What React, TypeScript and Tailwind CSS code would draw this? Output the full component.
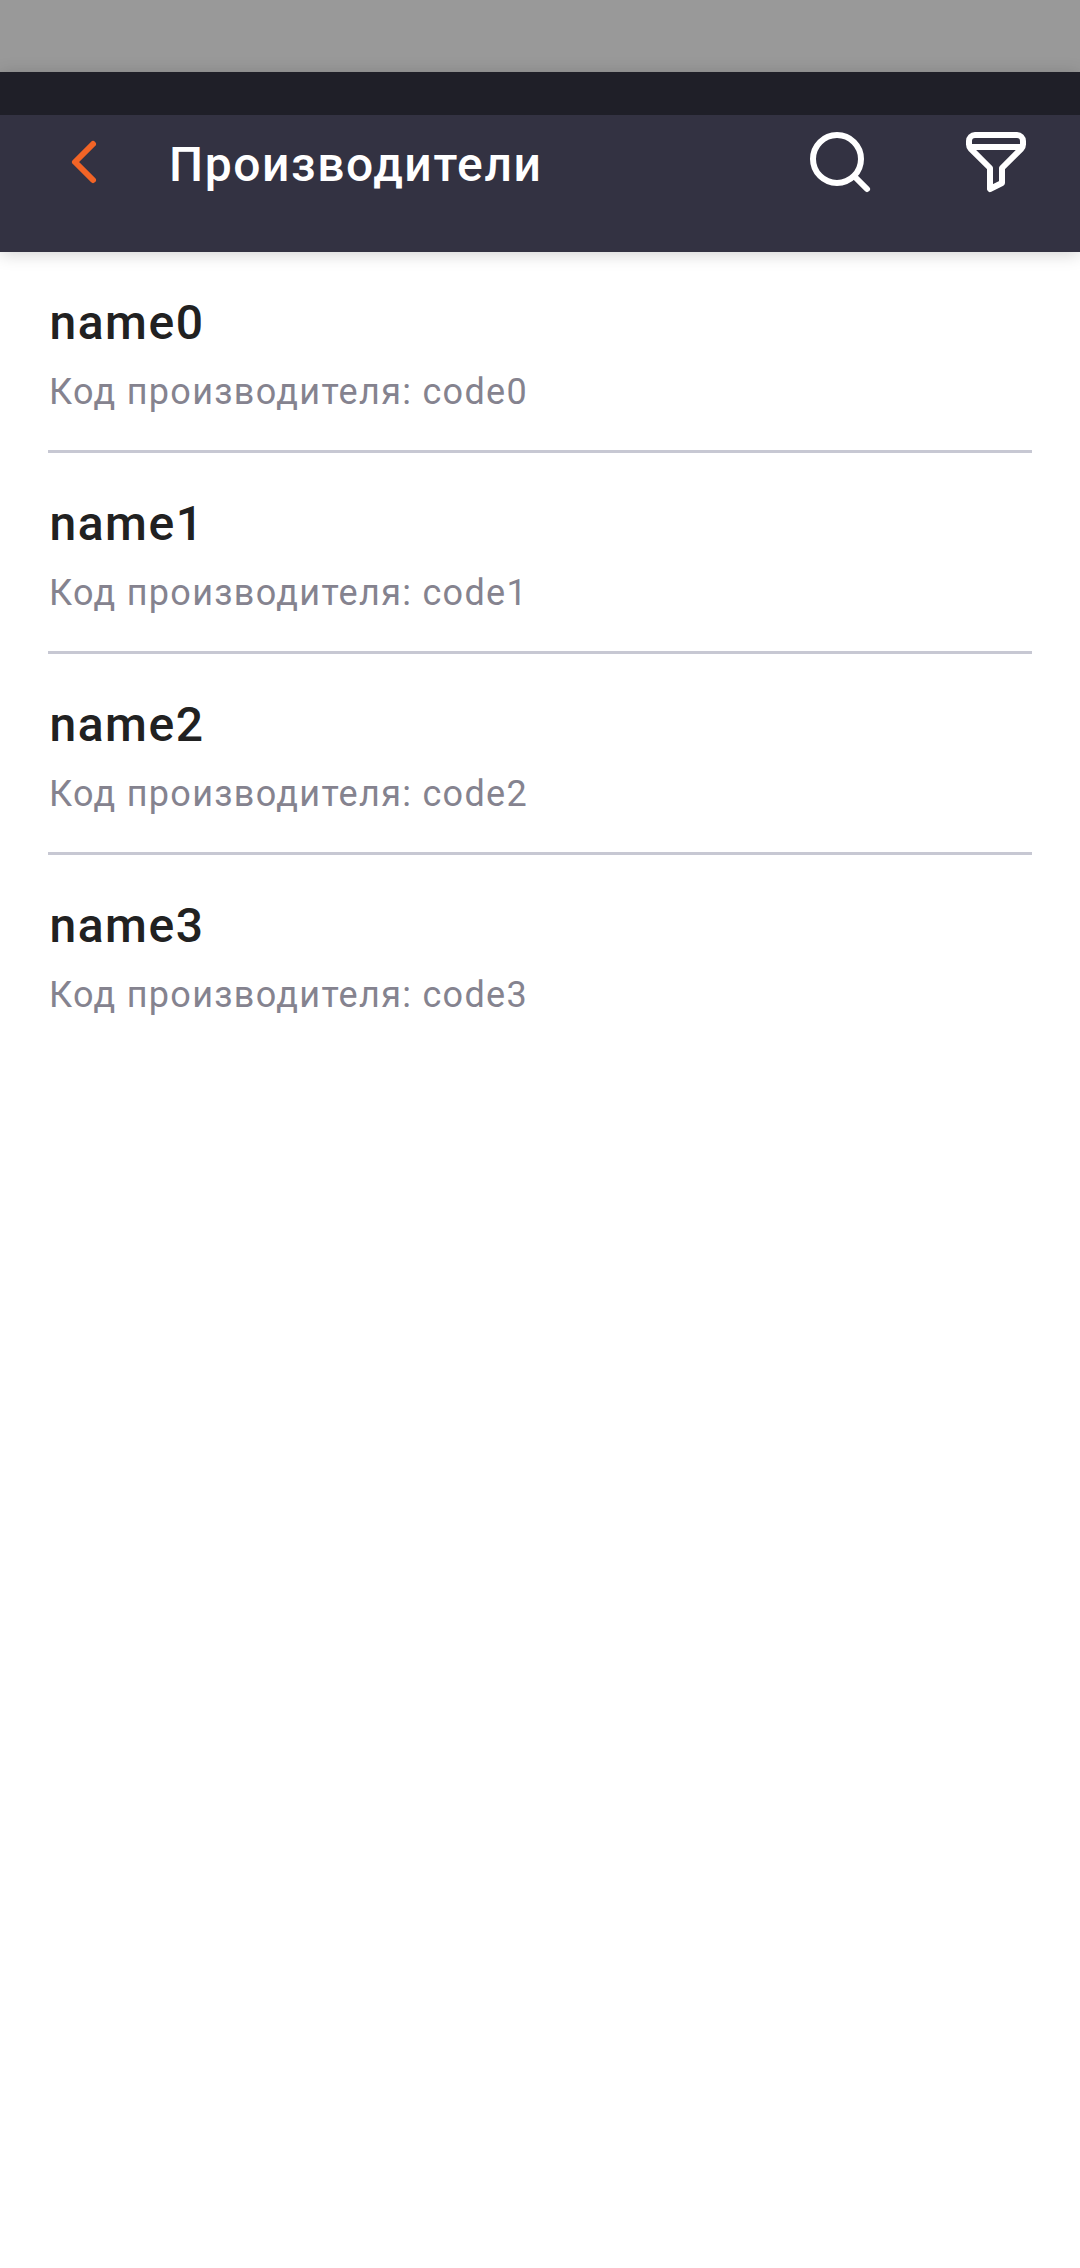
const items = [0, 1, 2, 3];

export default function App() {
  return (
    <div className="flex min-h-[2268px] w-[1080px] flex-col bg-white font-['Roboto',sans-serif]">
      <div className="h-[72px] bg-[#999999]" />
      <header className="relative h-[180px] bg-[#333242] shadow-[0_2px_16px_rgba(0,0,0,0.18)]">
        <div className="h-[43px] bg-[#1f1f28]" />
        <div className="flex h-[94px] items-center">
          <svg className="ml-[48px] h-[72px] w-[72px]" viewBox="0 0 72 72" fill="none" stroke="#f26426" strokeWidth="6" strokeLinecap="round" strokeLinejoin="round">
            <path d="M45 18L27 36L45 54" />
          </svg>
          <h1 className="mt-[6px] ml-[49px] text-[48px] leading-[56px] font-medium tracking-[1.6px] text-white">Производители</h1>
          <svg className="ml-auto h-[72px] w-[72px]" viewBox="0 0 24 24" fill="none" stroke="white" strokeWidth="2" strokeLinecap="round" strokeLinejoin="round">
            <circle cx="11" cy="11" r="8" />
            <path d="M17 17L21 21" />
          </svg>
          <svg className="mr-[48px] ml-[84px] h-[72px] w-[72px]" viewBox="0 0 24 24" fill="none" stroke="white" strokeWidth="2" strokeLinejoin="round">
            <path d="M5 3H19A2 2 0 0 1 21 5V6.17A2 2 0 0 1 20.41 7.59L14 14V19L10 21V14L3.59 7.59A2 2 0 0 1 3 6.17V5A2 2 0 0 1 5 3ZM3.5 7H20.5" />
          </svg>
        </div>
      </header>
      <main className="px-[48px]">
        {items.map((n) => (
          <section key={n} className="h-[201px] border-b-[3px] border-[#c7c8d3] pt-[43px] last:border-b-0">
            <h2 className="ml-[1.5px] text-[48px] leading-[56px] font-medium tracking-[1.5px] text-[#212121]">name{n}</h2>
            <p className="mt-[20px] ml-px text-[36px] leading-[42px] tracking-[1.3px] text-[#85838f]">Код производителя: code{n}</p>
          </section>
        ))}
      </main>
    </div>
  );
}
